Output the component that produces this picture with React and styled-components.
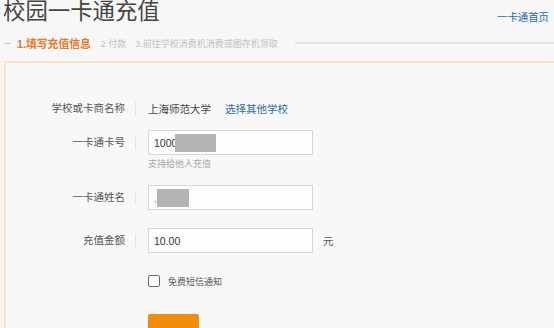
import styled, { createGlobalStyle } from "styled-components"

const GlobalStyle = createGlobalStyle`
    html, body {
        margin: 0;
        padding: 0;
        background: #f7f7f7;
        overflow: hidden;
        font-family: "Liberation Sans", "Noto Sans CJK SC", sans-serif;
    }
`
const Page = styled.div`
    width: 554px;
    height: 328px;
    overflow: hidden;
`
const Header = styled.div`
    display: flex;
    justify-content: space-between;
    align-items: flex-start;
    padding: 0 5px 0 3px;
    height: 32px;
`
const Title = styled.h1`
    margin: -1px 0 0 0;
    font-size: 22.4px;
    line-height: 25px;
    font-weight: normal;
    color: #454545;
`
const HomeLink = styled.a`
    margin-top: 9px;
    font-size: 10.4px;
    color: #2b6aa3;
    text-decoration: none;
`
const Steps = styled.div`
    display: flex;
    align-items: center;
    height: 22px;
    padding-left: 4px;
`
const Dash = styled.span`
    width: 7px;
    height: 1px;
    background: #c8c8c8;
    margin-right: 6px;
`
const Step = styled.span`
    font-size: ${(p) => (p.active ? "10.8px" : "9px")};
    font-weight: ${(p) => (p.active ? "bold" : "normal")};
    color: ${(p) => (p.active ? "#e8782a" : "#c0c0c0")};
    margin-right: ${(p) => (p.active ? "10px" : "9px")};
    white-space: nowrap;
`
const Line = styled.span`
    flex: 1;
    height: 2px;
    background: #e2e2e2;
    margin-left: 8px;
`
const Panel = styled.div`
    margin: 7px 0 0 4px;
    border-top: 2px solid #fbe5c6;
    border-left: 2px solid #fbe5c6;
    background: #f8f8f8;
    padding-top: 33px;
    height: 300px;
`
const Row = styled.div`
    display: flex;
    align-items: ${(p) => (p.top ? "flex-start" : "center")};
    min-height: 25px;
    margin-bottom: ${(p) => p.gap || 18}px;
`
const Label = styled.span`
    width: 119px;
    text-align: right;
    font-size: 10.5px;
    line-height: 25px;
    color: #555;
`
const Sep = styled.span`
    width: 1px;
    height: 14px;
    background: #e4e4e4;
    margin: ${(p) => (p.top ? "6px" : "0")} 12px 0 10px;
`
const Value = styled.span`
    font-size: 10.5px;
    color: #444;
`
const Link = styled.a`
    font-size: 10.5px;
    color: #2b6aa3;
    margin-left: 14px;
    text-decoration: none;
`
const Column = styled.div`
    display: flex;
    flex-direction: column;
`
const Field = styled.div`
    box-sizing: border-box;
    width: 165px;
    height: 25px;
    border: 1px solid #d6d6d6;
    background: #fdfdfd;
    padding-left: 5px;
    display: flex;
    align-items: center;
    font-size: 10.5px;
    color: #333;
`
const Mask = styled.span`
    display: inline-block;
    width: ${(p) => p.w}px;
    height: ${(p) => p.h}px;
    background: #b4b4b4;
    margin-left: ${(p) => p.ml || 0}px;
`
const Hint = styled.span`
    font-size: 9px;
    color: #a5a5a5;
    margin-top: 3px;
    line-height: 12px;
`
const Unit = styled.span`
    font-size: 10.5px;
    color: #555;
    margin-left: 10px;
`
const CheckRow = styled.label`
    display: flex;
    align-items: center;
    height: 20px;
    margin: 0 0 23px 142px;
    font-size: 9px;
    color: #555;
`
const Box = styled.span`
    box-sizing: border-box;
    width: 12px;
    height: 12px;
    border: 1.5px solid #6a6a6a;
    border-radius: 2px;
    background: #fff;
    margin-right: 8px;
`
const Submit = styled.button`
    margin-left: 142px;
    width: 51px;
    height: 28px;
    border: none;
    border-radius: 2px;
    background: #f28c0a;
    color: #fff;
`

export default function App() {
    return (
        <Page>
            <GlobalStyle />
            <Header>
                <Title>校园一卡通充值</Title>
                <HomeLink href="#">一卡通首页</HomeLink>
            </Header>
            <Steps>
                <Dash />
                <Step active>1.填写充值信息</Step>
                <Step>2.付款</Step>
                <Step>3.前往学校消费机消费或圈存机领取</Step>
                <Line />
            </Steps>
            <Panel>
                <Row gap={9}>
                    <Label>学校或卡商名称</Label>
                    <Sep />
                    <Value>上海师范大学</Value>
                    <Link href="#">选择其他学校</Link>
                </Row>
                <Row top gap={15}>
                    <Label>一卡通卡号</Label>
                    <Sep top />
                    <Column>
                        <Field>
                            1000<Mask w={41} h={18} ml={-2} />
                        </Field>
                        <Hint>支持给他人充值</Hint>
                    </Column>
                </Row>
                <Row>
                    <Label>一卡通姓名</Label>
                    <Sep />
                    <Field>
                        <span style={{ color: "#999" }}>,</span>
                        <Mask w={32} h={18} />
                    </Field>
                </Row>
                <Row>
                    <Label>充值金额</Label>
                    <Sep />
                    <Field>10.00</Field>
                    <Unit>元</Unit>
                </Row>
                <CheckRow>
                    <Box />
                    免费短信通知
                </CheckRow>
                <Submit />
            </Panel>
        </Page>
    )
}
